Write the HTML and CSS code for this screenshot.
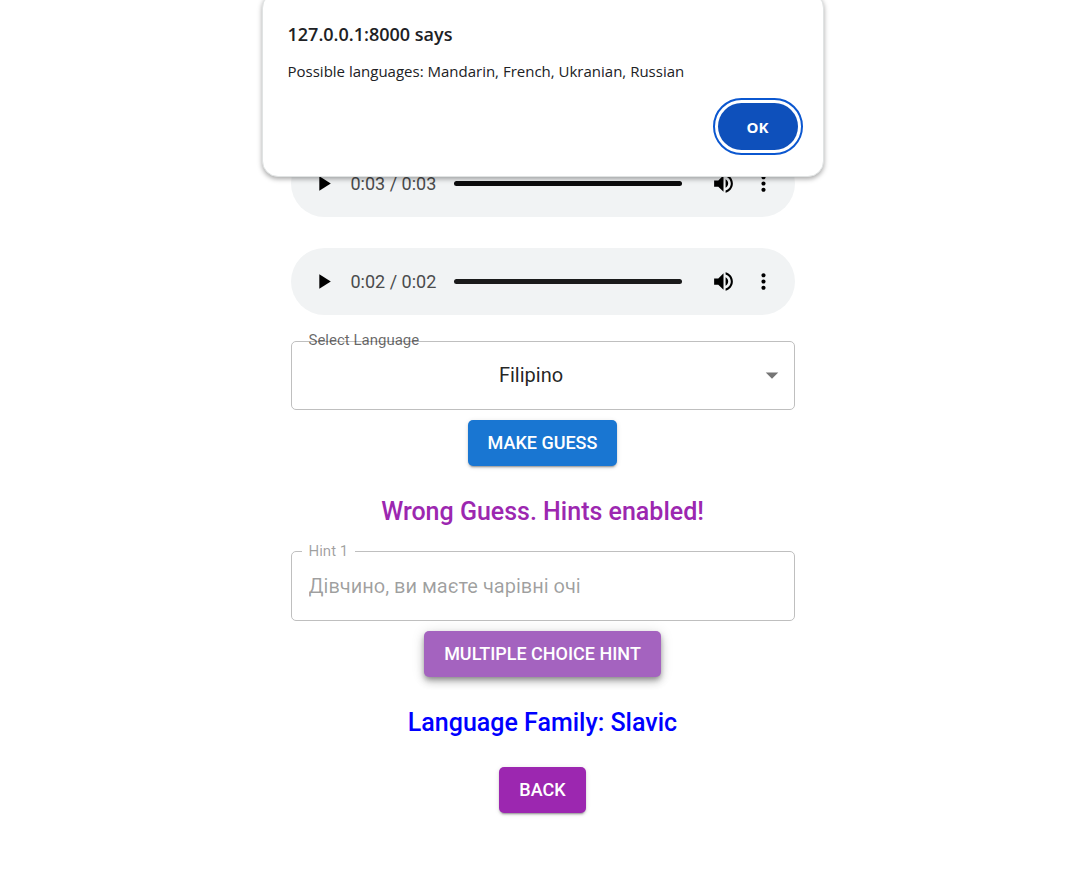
FILE: index.html
```html
<!DOCTYPE html>
<html lang="en">
<head>
<meta charset="utf-8">
<meta name="viewport" content="width=device-width, initial-scale=1">
<title>Guess the language</title>
<link rel="stylesheet" href="styles.css">
</head>
<body>
<svg class="sprite" aria-hidden="true">
  <symbol id="play" viewBox="0 0 24 24"><path d="M8 5v14l11-7z"/></symbol>
  <symbol id="volume" viewBox="0 0 24 24"><path d="M3 9v6h4l5 5V4L7 9H3zm13.5 3c0-1.77-1.02-3.29-2.5-4.03v8.05c1.48-.73 2.5-2.25 2.5-4.02zM14 3.23v2.06c2.89.86 5 3.54 5 6.71s-2.11 5.85-5 6.71v2.06c4.01-.91 7-4.49 7-8.77s-2.99-7.86-7-8.77z"/></symbol>
  <symbol id="more" viewBox="0 0 24 24"><path d="M12 8c1.1 0 2-.9 2-2s-.9-2-2-2-2 .9-2 2 .9 2 2 2zm0 2c-1.1 0-2 .9-2 2s.9 2 2 2 2-.9 2-2-.9-2-2-2zm0 6c-1.1 0-2 .9-2 2s.9 2 2 2 2-.9 2-2-.9-2-2-2z"/></symbol>
</svg>
<main class="game">
  <div class="player">
    <button class="icon-button" type="button" aria-label="Play"><svg><use href="#play"/></svg></button>
    <span class="time">0:03 / 0:03</span>
    <input class="seek seek-dark" type="range" min="0" max="3" value="3" aria-label="Position">
    <button class="icon-button" type="button" aria-label="Mute"><svg><use href="#volume"/></svg></button>
    <button class="icon-button" type="button" aria-label="More options"><svg><use href="#more"/></svg></button>
  </div>
  <div class="player">
    <button class="icon-button" type="button" aria-label="Play"><svg><use href="#play"/></svg></button>
    <span class="time">0:02 / 0:02</span>
    <input class="seek" type="range" min="0" max="2" value="2" aria-label="Position">
    <button class="icon-button" type="button" aria-label="Mute"><svg><use href="#volume"/></svg></button>
    <button class="icon-button" type="button" aria-label="More options"><svg><use href="#more"/></svg></button>
  </div>
  <div class="select-field">
    <label class="select-label" for="language">Select Language</label>
    <select class="select" id="language">
      <option selected>Filipino</option>
      <option>Mandarin</option>
      <option>French</option>
      <option>Ukranian</option>
      <option>Russian</option>
    </select>
    <svg class="arrow" viewBox="0 0 24 24" aria-hidden="true"><path d="M7 10l5 5 5-5z"/></svg>
  </div>
  <button class="button button-primary" type="button">Make Guess</button>
  <h2 class="message message-wrong">Wrong Guess. Hints enabled!</h2>
  <fieldset class="hint">
    <legend class="hint-legend"><label for="hint">Hint 1</label></legend>
    <input class="hint-input" id="hint" type="text" value="Дівчино, ви маєте чарівні очі" disabled>
  </fieldset>
  <button class="button button-pressed" type="button">Multiple Choice Hint</button>
  <h2 class="message message-family">Language Family: Slavic</h2>
  <button class="button button-secondary" type="button">Back</button>
</main>
<dialog class="alert" open aria-labelledby="alert-title">
  <h1 class="alert-title" id="alert-title">127.0.0.1:8000 says</h1>
  <p class="alert-text">Possible languages: Mandarin, French, Ukranian, Russian</p>
  <button class="alert-ok" type="button">OK</button>
</dialog>
</body>
</html>
```
FILE: styles.css
```css
* { box-sizing: border-box; }

body {
  margin: 0;
  background: #fff;
  color: rgba(0, 0, 0, 0.87);
  font-family: Roboto, "Liberation Sans", sans-serif;
}

button, input, select { font-family: inherit; }

.sprite { display: none; }

.game {
  display: flex;
  flex-direction: column;
  align-items: center;
  max-width: 504px;
  margin: 0 auto;
  padding: 150px 0 32px;
}

.player {
  display: flex;
  align-items: center;
  gap: 15px;
  width: 100%;
  height: 67px;
  margin-bottom: 31px;
  padding: 0 19px 0 20px;
  border-radius: 34px;
  background: #f1f3f4;
}

.player + .select-field { margin-top: -5px; }

.icon-button {
  flex: none;
  width: 25px;
  height: 25px;
  padding: 0;
  border: 0;
  background: none;
}

.icon-button svg {
  display: block;
  width: 25px;
  height: 25px;
}

.time {
  flex: none;
  color: #4a4b4c;
  font-size: 18px;
  line-height: 24px;
}

.seek {
  flex: 1;
  min-width: 0;
  height: 5px;
  margin: 0 14px 0 3px;
  border-radius: 3px;
  background: #1a1a1b;
  appearance: none;
}

.seek-dark { background: #0c0c0d; }

.seek::-webkit-slider-thumb {
  width: 1px;
  height: 5px;
  appearance: none;
  opacity: 0;
}

.select-field {
  position: relative;
  width: 100%;
}

.select-label {
  position: absolute;
  top: -11px;
  left: 18px;
  color: rgba(0, 0, 0, 0.6);
  font-size: 15px;
  line-height: 20px;
}

.select {
  display: block;
  width: 100%;
  height: 69px;
  padding: 0 40px 2px 17px;
  border: 1px solid #bfbfbf;
  border-radius: 5px;
  background: none;
  color: inherit;
  font-size: 20px;
  text-align: center;
  text-align-last: center;
  appearance: none;
}

.arrow {
  position: absolute;
  top: 19px;
  right: 8px;
  width: 30px;
  height: 30px;
  fill: #757575;
  pointer-events: none;
}

.button {
  margin-top: 10px;
  padding: 8px 20px;
  border: 0;
  border-radius: 5px;
  color: #fff;
  font-size: 18px;
  font-weight: 500;
  line-height: 30px;
  text-transform: uppercase;
  box-shadow: 0 3px 1px -2px rgba(0, 0, 0, 0.2), 0 2px 2px rgba(0, 0, 0, 0.14), 0 1px 5px rgba(0, 0, 0, 0.12);
}

.button-primary { background: #1976d2; }

.button-secondary { background: #9c27b0; }

.button-pressed {
  background: #a463bf;
  box-shadow: 0 3px 5px -1px rgba(0, 0, 0, 0.3), 0 5px 8px rgba(0, 0, 0, 0.2), 0 1px 14px rgba(0, 0, 0, 0.12);
}

.message {
  margin: 26px 0 19px;
  font-size: 25px;
  font-weight: 500;
  line-height: 40px;
  text-align: center;
}

.message-wrong {
  margin-bottom: 9px;
  color: #9c27b0;
}

.message-family { color: #00f; }

.message + .button { margin-top: 5px; }

.hint {
  width: 100%;
  min-width: 0;
  margin: 0;
  padding: 0 17px 0 10px;
  border: 1px solid #bfbfbf;
  border-radius: 5px;
}

.hint-legend {
  padding: 0 7px;
  color: rgba(0, 0, 0, 0.38);
  font-size: 15px;
  line-height: 20px;
}

.hint-input {
  display: block;
  width: 100%;
  height: 59px;
  padding: 0 7px 9px;
  border: 0;
  background: none;
  color: rgba(0, 0, 0, 0.38);
  font-size: 20px;
}

.alert {
  position: absolute;
  top: -8px;
  right: 0;
  left: 0;
  display: flex;
  flex-direction: column;
  width: 562px;
  max-width: 100%;
  margin: 0 auto;
  padding: 29px 25px 26px;
  border: 1px solid #e0e3e3;
  border-radius: 16px;
  background: #fff;
  color: #202124;
  font-family: "Open Sans", "Noto Sans", sans-serif;
  box-shadow: 0 2px 5px rgba(0, 0, 0, 0.35);
}

.alert-title {
  margin: 0;
  font-size: 18px;
  font-weight: 600;
  line-height: 24px;
}

.alert-text {
  margin: 15px 0 22px;
  font-size: 15px;
  line-height: 20px;
}

.alert-ok {
  align-self: flex-end;
  width: 80px;
  height: 47px;
  border: 0;
  border-radius: 24px;
  outline: 2px solid #0b57d0;
  outline-offset: 3px;
  background: #0e50bb;
  color: #fff;
  font-size: 15px;
  font-weight: 700;
}
```
